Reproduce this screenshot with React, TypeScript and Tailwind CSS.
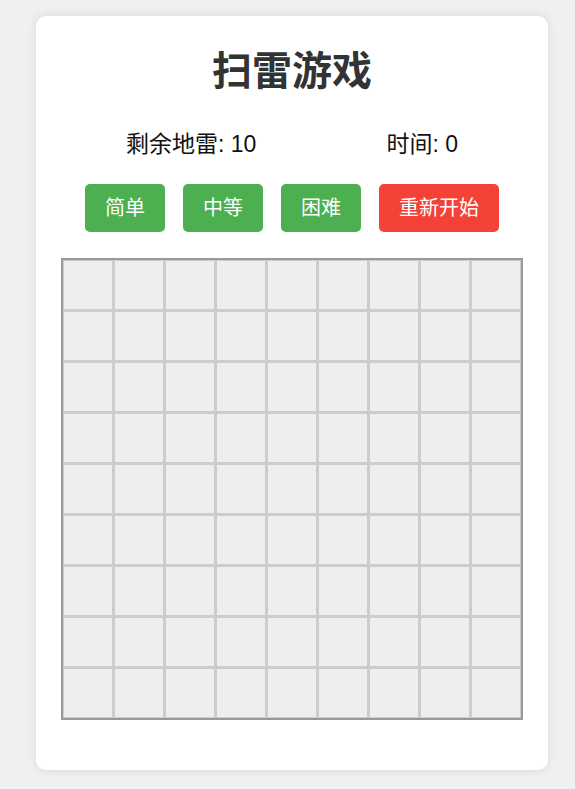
import React from "react";

export default function App() {
  const cells = Array.from({ length: 81 }, (_, i) => i);
  return (
    <div
      className="min-h-[789px] bg-[#f0f0f0] pt-[16px]"
      style={{ fontFamily: '"Liberation Sans", "Noto Sans CJK SC", sans-serif' }}
    >
      <div className="ml-[36px] w-[512px] rounded-[10px] bg-white px-[25px] pt-[25px] pb-[50px] shadow-[0_0_10px_rgba(0,0,0,0.1)]">
        <h1 className="mt-[6px] text-center text-[40px] font-bold leading-[48px] text-[#333]">
          扫雷游戏
        </h1>
        <div className="mt-[34px] flex justify-around text-[23px] leading-[30px] text-[#111]">
          <div>剩余地雷: 10</div>
          <div>时间: 0</div>
        </div>
        <div className="mt-[25px] flex justify-center gap-[18px]">
          <button className="rounded-[5px] bg-[#4CAF50] px-5 py-[10px] text-[20px] leading-[28px] text-white">
            简单
          </button>
          <button className="rounded-[5px] bg-[#4CAF50] px-5 py-[10px] text-[20px] leading-[28px] text-white">
            中等
          </button>
          <button className="rounded-[5px] bg-[#4CAF50] px-5 py-[10px] text-[20px] leading-[28px] text-white">
            困难
          </button>
          <button className="rounded-[5px] bg-[#f44336] px-5 py-[10px] text-[20px] leading-[28px] text-white">
            重新开始
          </button>
        </div>
        <div className="mt-[26px] grid grid-cols-9 gap-px border-2 border-[#999] bg-[#ccc]">
          {cells.map((i) => (
            <div key={i} className="h-[50px] border border-[#ccc] bg-[#eee]" />
          ))}
        </div>
      </div>
    </div>
  );
}
